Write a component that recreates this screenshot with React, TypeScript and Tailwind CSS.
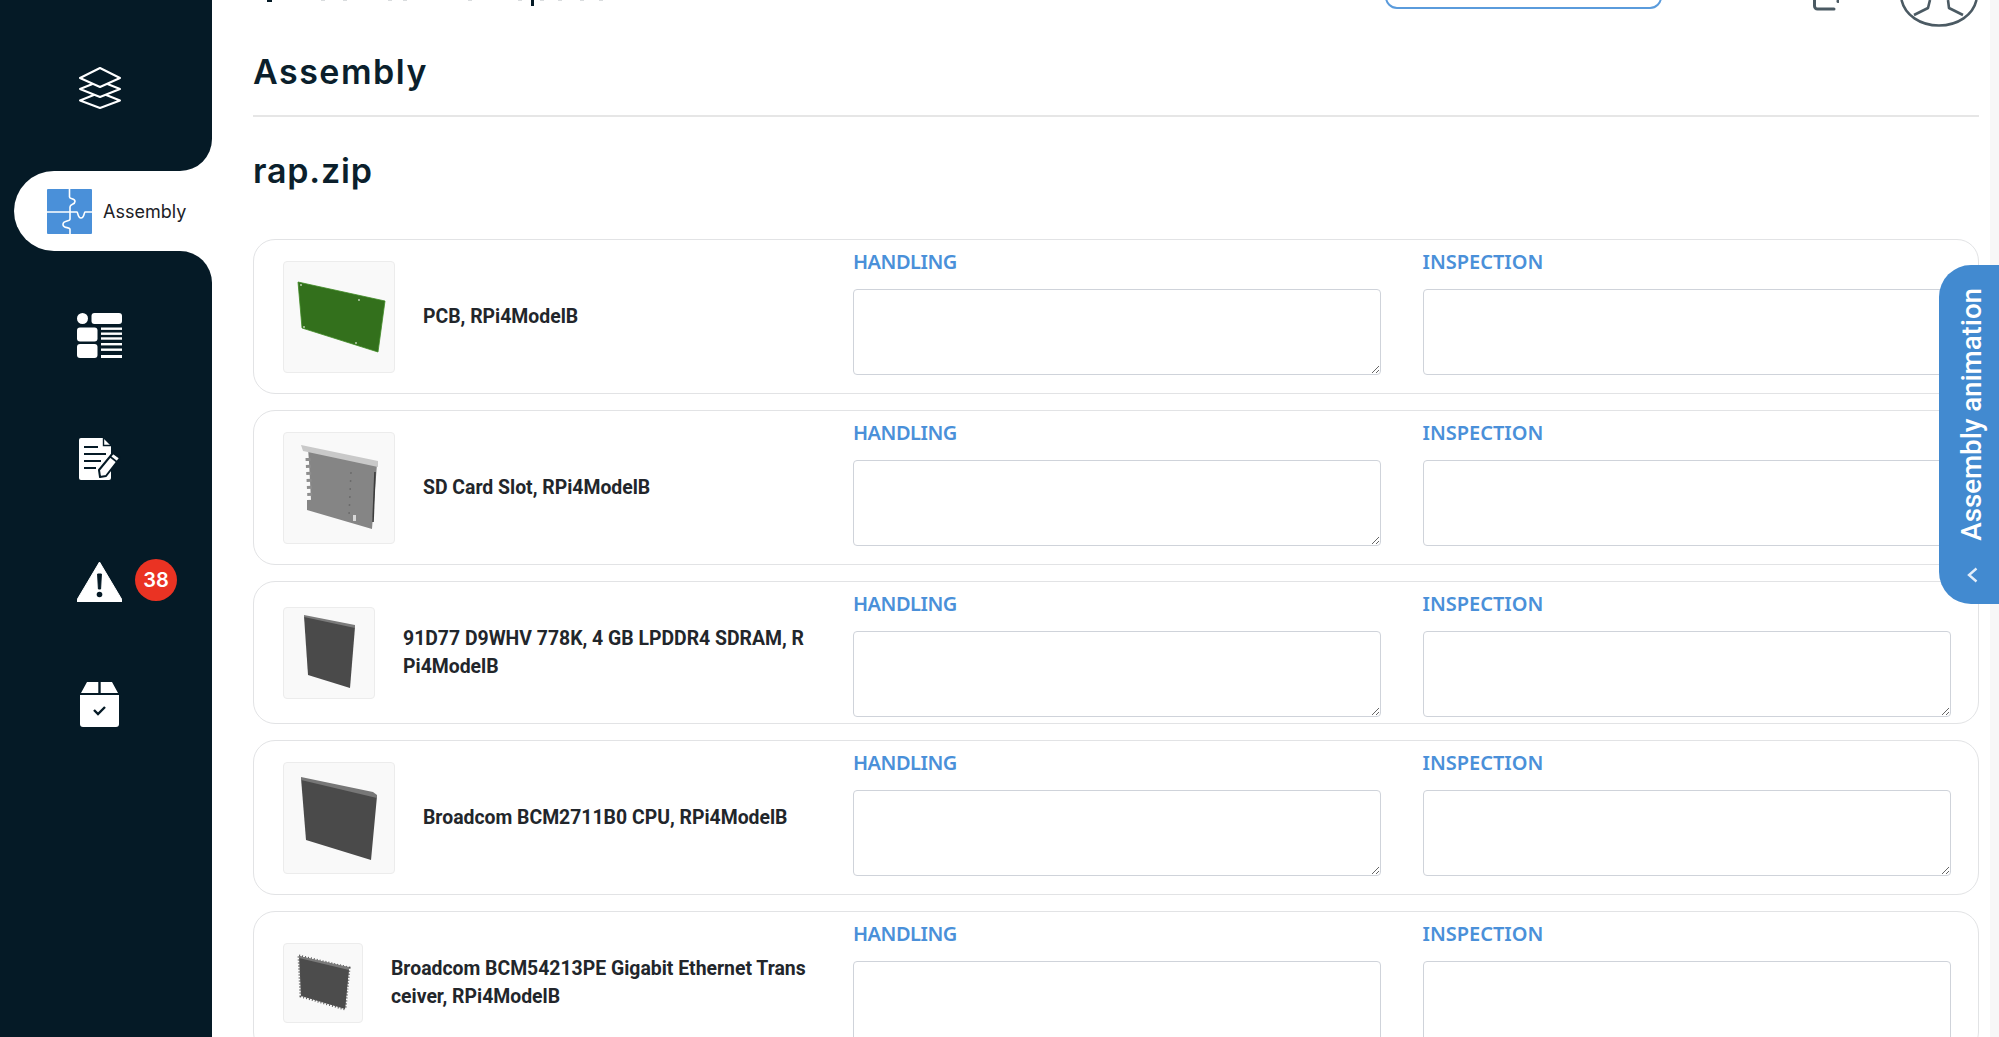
import React from "react";

const StackIcon = () => (
  <svg width="44" height="42" viewBox="0 0 44 42" fill="none" stroke="#fff" strokeWidth="2" strokeLinejoin="round">
    <path d="M22 25.5 L2 33.5 L22 41 L42 33.5 Z" />
    <path d="M22 14 L2 22 L22 30 L42 22 Z" fill="#051a26" />
    <path d="M22 1 L2 11 L22 20 L42 11 Z" fill="#051a26" />
  </svg>
);

const PuzzleIcon = () => (
  <svg width="45" height="45" viewBox="0 0 45 45" fill="none">
    <rect width="45" height="45" rx="1" fill="#4a90d9" />
    <g stroke="#fff" strokeWidth="1.6" fill="none">
      <path d="M22.5 0 V8 C22.5 10.5 28 9 28 12.5 C28 16 23 14.5 23 18 V23" />
      <path d="M0 23 H30 C31 23 30.5 29 34 29 C37.5 29 37 23 38 23 H45" />
      <path d="M23 23 V30 C23 33 16 31 16 35.5 C16 40 23 37.5 23 40.5 V45" />
    </g>
  </svg>
);

const ListIcon = () => (
  <svg width="45" height="45" viewBox="0 0 45 45" fill="#fff">
    <circle cx="5.5" cy="5.5" r="5.5" />
    <rect x="14.5" y="0" width="30.5" height="11" rx="3" />
    <rect x="0" y="14.5" width="20.5" height="14" rx="3" />
    <rect x="0" y="31" width="20.5" height="14" rx="3" />
    <rect x="24" y="14.5" width="21" height="2.4" />
    <rect x="24" y="19.5" width="21" height="2.4" />
    <rect x="24" y="24.3" width="21" height="2.4" />
    <rect x="24" y="30" width="21" height="2.4" />
    <rect x="24" y="35.5" width="21" height="2.4" />
    <rect x="24" y="42" width="21" height="3" />
  </svg>
);

const DocIcon = () => (
  <svg width="42" height="42" viewBox="0 0 42 42" fill="none">
    <path d="M2 0 H24 L32 8 V40 A2 2 0 0 1 30 42 H2 A2 2 0 0 1 0 40 V2 A2 2 0 0 1 2 0 Z" fill="#fff" />
    <path d="M24.5 0 V7.5 H32" stroke="#051a26" strokeWidth="1.4" />
    <path d="M5 9 H19 M5 16 H27 M5 23 H22 M5 30 H17" stroke="#051a26" strokeWidth="2" />
    <path d="M21 39 L20 32 L34 15 L41 20 L27 38 Z" fill="#fff" stroke="#051a26" strokeWidth="2" strokeLinejoin="round" />
    <path d="M31 18.5 L38 24" stroke="#051a26" strokeWidth="1.6" />
  </svg>
);

const WarnIcon = () => (
  <svg width="45" height="41" viewBox="0 0 45 41">
    <path d="M22.5 1 L44.5 38 A1.5 1.5 0 0 1 43 41 H2 A1.5 1.5 0 0 1 0.5 38 Z" fill="#fff" stroke="#fff" strokeLinejoin="round" />
    <path d="M20.6 13 H24.4 L23.6 28 H21.4 Z" fill="#051a26" stroke="#051a26" strokeLinejoin="round" />
    <circle cx="22.5" cy="33.5" r="2.8" fill="#051a26" />
  </svg>
);

const BoxIcon = () => (
  <svg width="39" height="45" viewBox="0 0 39 45">
    <path d="M7 0 H18.3 V11 H1 Z M20.7 0 H32 L38 11 H20.7 Z" fill="#fff" />
    <path d="M0 13 H39 V42 A3 3 0 0 1 36 45 H3 A3 3 0 0 1 0 42 Z" fill="#fff" />
    <path d="M14 28 L18 32 L25 25" fill="none" stroke="#051a26" strokeWidth="2.4" />
  </svg>
);

const NavRow = ({ children, badge }: { children: React.ReactNode; badge?: string }) => (
  <div className="relative flex h-[123px] w-[199px] items-center justify-center">
    {children}
    {badge && (
      <span className="absolute left-[135px] top-[39px] flex h-[42px] w-[42px] items-center justify-center rounded-full bg-[#ea3323] font-['Inter',sans-serif] text-[20px] font-semibold text-white">
        {badge}
      </span>
    )}
  </div>
);

const Pcb = () => (
  <svg width="110" height="110" viewBox="1 1 110 110">
    <path d="M15 21 L102 40 L95 91 L19 67 Z" fill="#33701c" stroke="#3f8a24" strokeWidth="0.8" strokeLinejoin="round" />
    <g fill="#c9d8c0">
      <circle cx="18" cy="24" r="0.9" /><circle cx="76" cy="39" r="0.9" /><circle cx="21" cy="66" r="0.9" /><circle cx="73" cy="82" r="0.9" />
    </g>
  </svg>
);

const Sd = () => (
  <svg width="110" height="110" viewBox="1 1 110 110">
    <path d="M25 16 L94 32 L89 97 L24 78 L24 68 L28 68 L26 30 Z" fill="#858585" />
    <path d="M25 26 L27 68" stroke="#8e8e8e" strokeWidth="5" strokeDasharray="3 4" />
    <path d="M18 13 L95 29 L95 35 L20 19 Z" fill="#c9c9c9" />
    <path d="M92 40 L90 90" stroke="#3c3c3c" strokeWidth="1.6" />
    <path d="M68 40 L66 84" stroke="#6c6c6c" strokeWidth="1.5" strokeDasharray="2 6" />
    <rect x="70" y="83" width="3" height="6" fill="#d8d8d8" />
  </svg>
);

const Chip3 = () => (
  <svg width="90" height="90" viewBox="1 1 90 90">
    <path d="M21 9 L72 20 L67 81 L25 68 Z" fill="#4a4a4a" />
    <path d="M21 8 L72 18 L72 21 L21 10 Z" fill="#7b7b7b" />
  </svg>
);

const Chip4 = () => (
  <svg width="110" height="110" viewBox="1 1 110 110">
    <path d="M18 16 L94 34 L88 98 L23 78 Z" fill="#4a4a4a" />
    <path d="M18 15 L90 30 L94 33 L94 36 L18 18 Z" fill="#777" />
  </svg>
);

const Chip5 = () => (
  <svg width="78" height="78" viewBox="1 1 78 78">
    <path d="M16 13 L66 25 L62 66 L18 53 Z" fill="#4c4c4c" stroke="#555" strokeWidth="3" strokeDasharray="1 2" />
    <path d="M17 14 L66 25 L62 65 L19 52 Z" fill="#4c4c4c" />
    <path d="M16 13 L66 24 L66 27 L16 15 Z" fill="#7a7a7a" />
  </svg>
);

const Col = ({ title }: { title: string }) => (
  <div className="flex flex-col">
    <div
      className={
        title === "HANDLING"
          ? "flex h-[49px] items-center pb-[5px] font-['Noto_Sans',sans-serif] text-[20px] font-semibold leading-none tracking-[-0.5px] text-[#4a90d9]"
          : "flex h-[49px] items-center pb-[5px] font-['Noto_Sans',sans-serif] text-[20px] font-semibold leading-none text-[#4a90d9]"
      }
    >
      {title}
    </div>
    <textarea className="block h-[86px] w-full rounded-[4px] border-[1.5px] border-[#cfd3da] bg-white" />
  </div>
);

const Card = ({
  size,
  name,
  art,
}: {
  size: "lg" | "md" | "sm";
  name: string;
  art: React.ReactNode;
}) => (
  <div className="flex w-full shrink-0 items-center rounded-[22px] border border-[#e2e3e5] bg-white">
    <div className="flex w-[599px] shrink-0 items-center gap-[28px] pl-[29px] pr-[42px]">
      <div
        className={
          size === "lg"
            ? "my-[20.5px] flex h-[112px] w-[112px] shrink-0 items-center justify-center rounded-[4px] border border-[#ececec] bg-[#f9f9f9]"
            : size === "md"
              ? "flex h-[92px] w-[92px] shrink-0 items-center justify-center rounded-[4px] border border-[#ececec] bg-[#f9f9f9]"
              : "flex h-[80px] w-[80px] shrink-0 items-center justify-center rounded-[4px] border border-[#ececec] bg-[#f9f9f9]"
        }
      >
        {art}
      </div>
      <div className="break-all font-['Roboto',sans-serif] text-[19.4px] font-bold leading-[28px] text-[#22262b]">{name}</div>
    </div>
    <div className="grid w-[1098px] shrink-0 grid-cols-[528px_528px] gap-[41.5px] self-start pb-[6px]">
      <Col title="HANDLING" />
      <Col title="INSPECTION" />
    </div>
  </div>
);

export default function App() {
  return (
    <div className="relative flex h-[1037px] w-[1999px] overflow-hidden bg-white">
      <aside className="flex h-full w-[212px] shrink-0 flex-col bg-white">
        <div className="flex h-[171px] shrink-0 items-start rounded-br-[32px] bg-[#051a26]">
          <div className="flex h-[176px] w-[199px] items-center justify-center">
            <StackIcon />
          </div>
        </div>
        <div className="h-[80px] shrink-0 bg-[#051a26] pl-[14px]">
          <div className="flex h-full items-center gap-[11px] rounded-l-[40px] bg-white pl-[33px]">
            <PuzzleIcon />
            <span className="font-['Inter',sans-serif] text-[18px] text-[#1c2126]">Assembly</span>
          </div>
        </div>
        <div className="flex-1 rounded-tr-[32px] bg-[#051a26] pt-[23px]">
          <NavRow><ListIcon /></NavRow>
          <NavRow><DocIcon /></NavRow>
          <NavRow badge="38"><WarnIcon /></NavRow>
          <NavRow><BoxIcon /></NavRow>
        </div>
      </aside>

      <main className="flex min-w-0 flex-1 flex-col pl-[41px] pr-[11px]">
        <div className="relative flex h-[26px] shrink-0 items-start">
          <svg className="absolute left-0 top-0" width="400" height="8" viewBox="0 0 400 8">
            <rect x="14" y="0" width="5" height="2" fill="#051a26" />
            <rect x="278" y="0" width="3" height="6" fill="#051a26" />
            <g fill="#d9dcde">
              <rect x="68" y="0" width="4" height="1" /><rect x="90" y="0" width="4" height="1" /><rect x="135" y="0" width="4" height="1" />
              <rect x="150" y="0" width="4" height="1" /><rect x="215" y="0" width="4" height="1" /><rect x="265" y="0" width="4" height="1" />
              <rect x="287" y="0" width="4" height="1" /><rect x="305" y="0" width="4" height="1" /><rect x="327" y="0" width="4" height="1" /><rect x="346" y="0" width="4" height="1" />
            </g>
          </svg>
          <div className="ml-[1132px] -mt-[31px] h-[40px] w-[277px] shrink-0 rounded-[12px] border-2 border-[#5a9bdc] bg-white" />
          <svg className="ml-[151px] shrink-0" width="26" height="12" viewBox="0 0 26 12" fill="none" stroke="#4b5a63" strokeWidth="3" strokeLinecap="round" strokeLinejoin="round">
            <path d="M1.5 0 V6 A3 3 0 0 0 4.5 9 H21" />
            <path d="M25 1 L25 1.4" />
          </svg>
          <svg className="ml-[61px] shrink-0" width="78" height="27" viewBox="0 0 78 27" fill="none" stroke="#4b5a63" strokeWidth="2.6" strokeLinejoin="round">
            <path d="M1.5 0 C5 15 20 25.5 39 25.5 C58 25.5 73 15 76.5 0" />
            <path d="M14 15 L28 8 L30 0 M48 0 L49 8 L63 15" />
          </svg>
        </div>

        <h1 className="mt-[22px] h-[48px] font-['Inter',sans-serif] text-[34px] font-semibold leading-[48px] tracking-[1.5px] text-[#0b1f2c]">Assembly</h1>
        <div className="mt-[19px] h-[2px] shrink-0 bg-[#e6e6e6]" />
        <h2 className="mt-[30px] h-[48px] font-['Inter',sans-serif] text-[34px] font-semibold leading-[48px] tracking-[0.8px] text-[#0b1f2c]">rap.zip</h2>

        <div className="mt-[44px] flex flex-col gap-[16px]">
          <Card size="lg" name="PCB, RPi4ModelB" art={<Pcb />} />
          <Card size="lg" name="SD Card Slot, RPi4ModelB" art={<Sd />} />
          <Card size="md" name="91D77 D9WHV 778K, 4 GB LPDDR4 SDRAM, RPi4ModelB" art={<Chip3 />} />
          <Card size="lg" name="Broadcom BCM2711B0 CPU, RPi4ModelB" art={<Chip4 />} />
          <Card size="sm" name="Broadcom BCM54213PE Gigabit Ethernet Transceiver, RPi4ModelB" art={<Chip5 />} />
        </div>
      </main>

      <div className="h-full w-[9px] shrink-0 bg-[#f7f7f7]" />

      <div className="absolute right-0 top-[265px] flex h-[339px] w-[60px] flex-col items-center rounded-l-[32px] bg-[#428ad0] pl-[6px]">
        <div className="flex h-[288px] items-end justify-center">
          <span className="mb-[12px] whitespace-nowrap font-['Roboto',sans-serif] text-[27.7px] font-medium leading-none text-white [writing-mode:vertical-rl] rotate-180">
            Assembly animation
          </span>
        </div>
        <svg className="mt-[14px]" width="11" height="16" viewBox="0 0 11 16" fill="none" stroke="#e3eefa" strokeWidth="2.4">
          <path d="M9.5 1.5 L2 8 L9.5 14.5" />
        </svg>
      </div>
    </div>
  );
}
